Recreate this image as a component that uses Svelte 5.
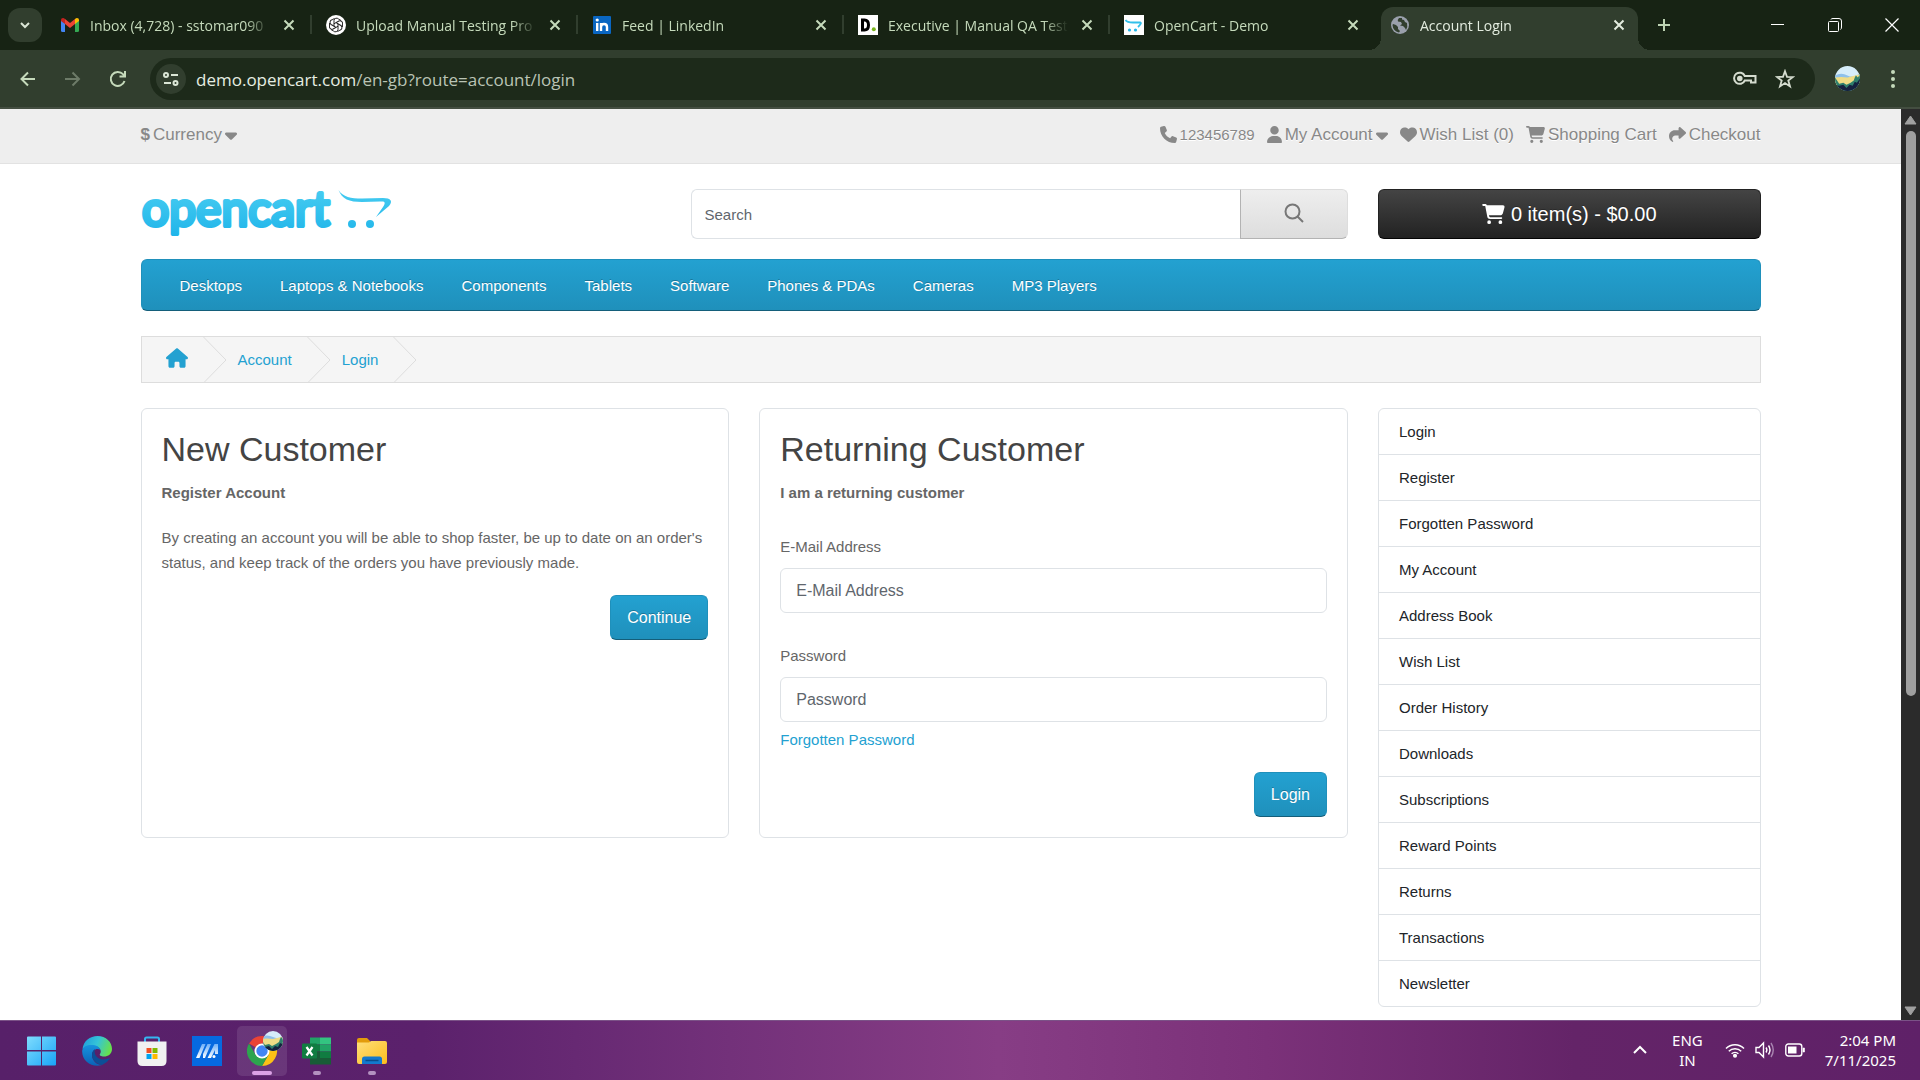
<script>
  const tabs = [
    { icon: 'gmail', title: 'Inbox (4,728) - sstomar090' },
    { icon: 'gpt', title: 'Upload Manual Testing Pro' },
    { icon: 'linkedin', title: 'Feed | LinkedIn' },
    { icon: 'd', title: 'Executive | Manual QA Test' },
    { icon: 'cart', title: 'OpenCart - Demo' },
    { icon: 'globe', title: 'Account Login', active: true }
  ];
  const menu = ['Desktops', 'Laptops & Notebooks', 'Components', 'Tablets', 'Software', 'Phones & PDAs', 'Cameras', 'MP3 Players'];
  const side = ['Login', 'Register', 'Forgotten Password', 'My Account', 'Address Book', 'Wish List', 'Order History', 'Downloads', 'Subscriptions', 'Reward Points', 'Returns', 'Transactions', 'Newsletter'];
  const petals = [0, 60, 120, 180, 240, 300];
  const paths = {
    caret: ['0 0 320 512', 'M137.4 374.6c12.5 12.5 32.8 12.5 45.3 0l128-128c9.2-9.2 11.9-22.9 6.9-34.9s-16.6-19.8-29.6-19.8L32 192c-12.9 0-24.6 7.8-29.6 19.8s-2.2 25.7 6.9 34.9l128 128z'],
    phone: ['0 0 512 512', 'M164.9 24.6c-7.7-18.6-28-28.5-47.4-23.2l-88 24C12.1 30.2 0 46 0 64C0 311.4 200.6 512 448 512c18 0 33.8-12.1 38.6-29.5l24-88c5.3-19.4-4.6-39.7-23.2-47.4l-96-40c-16.3-6.8-35.2-2.1-46.3 11.6L304.7 368C234.3 334.7 177.3 277.7 144 207.3L193.3 167c13.7-11.2 18.4-30 11.6-46.3l-40-96z'],
    user: ['0 0 448 512', 'M224 256A128 128 0 1 0 224 0a128 128 0 1 0 0 256zm-45.7 48C79.8 304 0 383.8 0 482.3C0 498.7 13.3 512 29.7 512H418.3c16.4 0 29.7-13.3 29.7-29.7C448 383.8 368.2 304 269.7 304H178.3z'],
    heart: ['0 0 512 512', 'M47.6 300.4L228.3 469.1c7.5 7 17.4 10.9 27.7 10.9s20.2-3.9 27.7-10.9L464.4 300.4c30.4-28.3 47.6-68 47.6-109.5v-5.8c0-69.9-50.5-129.5-119.4-141C347 36.5 300.6 51.4 268 84L256 96 244 84c-32.6-32.6-79-47.5-124.6-39.9C50.5 55.6 0 115.2 0 185.1v5.8c0 41.5 17.2 81.2 47.6 109.5z'],
    cart: ['0 0 576 512', 'M0 24C0 10.7 10.7 0 24 0H69.5c22 0 41.5 12.8 50.6 32h411c26.3 0 45.5 25 38.6 50.4l-41 152.3c-8.5 31.4-37 53.3-69.5 53.3H170.7l5.4 28.5c2.2 11.3 12.1 19.5 23.6 19.5H488c13.3 0 24 10.7 24 24s-10.7 24-24 24H199.7c-34.6 0-64.3-24.6-70.7-58.5L77.4 54.5c-.7-3.8-4-6.5-7.9-6.5H24C10.7 48 0 37.3 0 24zM128 464a48 48 0 1 1 96 0 48 48 0 1 1 -96 0zm336-48a48 48 0 1 1 0 96 48 48 0 1 1 0-96z'],
    share: ['0 0 512 512', 'M307 34.8c-11.5 5.1-19 16.6-19 29.2v64H176C78.8 128 0 206.8 0 304C0 417.3 81.5 467.9 100.2 478.1c2.5 1.4 5.3 1.9 8.1 1.9c10.9 0 19.7-8.9 19.7-19.7c0-7.5-4.3-14.4-9.8-19.5C108.8 431.9 96 414.4 96 384c0-53 43-96 96-96h96v64c0 12.6 7.4 24.1 19 29.2s25 3 34.4-5.4l160-144c6.7-6.1 10.6-14.7 10.6-23.8s-3.8-17.7-10.6-23.8l-160-144c-9.4-8.5-22.9-10.6-34.4-5.4z'],
    house: ['0 0 576 512', 'M575.8 255.5c0 18-15 32.1-32 32.1h-32l.7 160.2c0 2.7-.2 5.4-.5 8.1V472c0 22.1-17.9 40-40 40H456c-1.1 0-2.2 0-3.3-.1c-1.4 .1-2.8 .1-4.2 .1H416 392c-22.1 0-40-17.9-40-40V448 384c0-17.7-14.3-32-32-32H256c-17.7 0-32 14.3-32 32v64 24c0 22.1-17.9 40-40 40H160 128.1c-1.5 0-3-.1-4.5-.2c-1.2 .1-2.4 .2-3.6 .2H104c-22.1 0-40-17.9-40-40V360c0-.9 0-1.9 .1-2.8V287.6H32c-18 0-32-14-32-32.1c0-9 3-17 10-24L266.4 8c7-7 15-8 22-8s15 2 21 7L564.8 231.5c8 7 12 15 11 24z']
  };
</script>

{#snippet fa(name, cls = '')}
  <svg class="fa {cls}" viewBox={paths[name][0]} aria-hidden="true"><path d={paths[name][1]} /></svg>
{/snippet}

{#snippet landscape()}
  <rect width="24" height="24" fill="#d6edfa" />
  <path d="M0 9Q6 6 12 9T24 7V15H0Z" fill="#8fc1ea" />
  <path d="M0 11Q6 10 12 11L24 8V19H0Z" fill="#efdc86" />
  <path d="M0 11L2 14L4 17L8 16L11 18L15 16L18 14L19 11L20 9L22 11L24 8V24H0Z" fill="#2f7f6c" />
  <path d="M0 18L4 19L8 18L11 21L14 18L17 19L19 15L21 16L24 12V24H0Z" fill="#15213f" />
{/snippet}

{#snippet chevron()}
  <svg class="chev" viewBox="0 0 24 46" aria-hidden="true"><path d="M0.500 0L23 23L.5 46" fill="none" stroke="#ddd" /></svg>
{/snippet}

{#snippet swoosh(id)}
  <path d="M.5 1C5 8 13 9.500 24 9.500L45 9C53 9 55 12 51 17L38 28L45 18C48 13 47 12 42 12.500L24 13C11 13 4 10 .5 1Z" fill={id} />
  <circle cx="14" cy="35" r="4" fill={id} />
  <circle cx="32" cy="35" r="4" fill={id} />
{/snippet}

<div class="desktop">
  <div class="strip">
    <button class="tabmenu" aria-label="Search tabs"><svg width="14" height="14" viewBox="0 0 14 14"><path d="M3 5L7 9L11 5" fill="none" stroke="#dbe6d6" stroke-width="2" /></svg></button>
    <div class="tabs">
      {#each tabs as t}
        <div class="tab" class:active={t.active}>
          <svg class="fav" viewBox="0 0 20 20" aria-hidden="true">
            {#if t.icon === 'gmail'}
              <path d="M1 5V15.500Q1 17 2.500 17H5V8Z" fill="#4285f4" />
              <path d="M19 5V15.500Q19 17 17.500 17H15V8Z" fill="#34a853" />
              <path d="M5 4L10 8L15 4V9L10 13L5 9Z" fill="#ea4335" />
              <path d="M1 5Q1 3 3 3Q4 3 5 4V9L1 6Z" fill="#c5221f" />
              <path d="M19 5Q19 3 17 3Q16 3 15 4V9L19 6Z" fill="#fbbc04" />
            {:else if t.icon === 'gpt'}
              <circle cx="10" cy="10" r="10" fill="#fff" />
              <g fill="none" stroke="#222" stroke-width="1">
                {#each petals as a}
                  <path d="M8 9V5.500A2.600 2.600 0 0 1 12.500 4L15 5.500" transform="rotate({a} 10 10)" />
                {/each}
                <path d="M10 7.600L12 8.800V11.200L10 12.400L8 11.200V8.800Z" />
              </g>
            {:else if t.icon === 'linkedin'}
              <rect x="1" y="1" width="18" height="18" rx="1" fill="#0a66c2" />
              <g stroke="#fff" stroke-width="2.400" fill="none"><path d="M5.200 8V16M9 8V16M9 12Q9 9 12 9T15 12V16" /></g>
              <circle cx="5.200" cy="5" r="1.600" fill="#fff" />
            {:else if t.icon === 'd'}
              <rect width="20" height="20" fill="#fff" />
              <path d="M4.500 5V15H6.500Q10.500 15 10.500 10T6.500 5Z" fill="none" stroke="#000" stroke-width="3" />
              <circle cx="15.800" cy="14.300" r="2" fill="#7ab51d" />
            {:else if t.icon === 'cart'}
              <rect width="20" height="20" fill="#fff" />
              <path d="M1.500 5Q3 7.500 9 7.500H16.500Q18 8 14 12" fill="none" stroke="#33c0ea" stroke-width="1.800" />
              <circle cx="5.500" cy="15" r="1.600" fill="#23b7ea" /><circle cx="11.500" cy="15" r="1.600" fill="#23b7ea" />
            {:else}
              <circle cx="10" cy="10" r="9" fill="#9aa0ac" />
              <path d="M3 9L6 10L8 12L8 14L10 16L9 17.500Q3 16 2.500 10ZM9 3Q7 5 8 6.500L11 7L12 9L10 10.500L13 11L15 13L16 15Q18 12 17 8L15 7L14 5L12 4.500L12 3Z" fill="#313e2e" />
            {/if}
          </svg>
          <span class="ttl">{t.title}</span>
          <button class="x" aria-label="Close tab"><svg width="12" height="12" viewBox="0 0 12 12"><path d="M1.500 1.500L10.500 10.500M10.500 1.500L1.500 10.500" stroke="currentColor" stroke-width="2" /></svg></button>
        </div>
      {/each}
    </div>
    <button class="plus" aria-label="New tab"><svg width="14" height="14" viewBox="0 0 14 14"><path d="M7 1V13M1 7H13" stroke="#bdd3b3" stroke-width="2" /></svg></button>
    <div class="wins">
      <button aria-label="Minimize"><svg width="14" height="14" viewBox="0 0 14 14"><path d="M0 6.500H13" stroke="#fff" /></svg></button>
      <button aria-label="Restore"><svg width="14" height="14" viewBox="0 0 14 14" fill="none" stroke="#fff"><rect x=".5" y="3.500" width="10" height="10" rx="1" /><path d="M3 1.500Q3 .5 5 .5H11Q13.500 .5 13.500 3V9Q13.500 11 12.500 11.500" /></svg></button>
      <button aria-label="Close"><svg width="14" height="14" viewBox="0 0 14 14"><path d="M.5 .5L13.500 13.500M13.500 .5L.5 13.500" stroke="#fff" stroke-width="1.200" /></svg></button>
    </div>
  </div>

  <div class="toolbar">
    <div class="navs">
      <button aria-label="Back"><svg width="18" height="18" viewBox="0 0 18 18" fill="none" stroke="#c5dabb" stroke-width="2"><path d="M16 9H3M9 2.500L2.500 9L9 15.500" /></svg></button>
      <button aria-label="Forward"><svg width="18" height="18" viewBox="0 0 18 18" fill="none" stroke="#6d7b68" stroke-width="2"><path d="M1 9H15M8.500 2.500L15 9L8.500 15.500" /></svg></button>
      <button aria-label="Reload"><svg width="18" height="18" viewBox="0 0 18 18" fill="none" stroke="#c5dabb" stroke-width="2"><path d="M15.500 11A7 7 0 1 1 14 4.200L16 6M16 1V6.500H10.500" /></svg></button>
    </div>
    <div class="omni">
      <button class="tune" aria-label="Site information"><svg width="18" height="18" viewBox="0 0 18 18" fill="none" stroke="#dbe6d6" stroke-width="2"><circle cx="4" cy="5" r="2" /><path d="M9 5H16M2 13H9" /><circle cx="13.500" cy="13" r="2" /></svg></button>
      <a class="url" href="#top">demo.opencart.com<span>/en-gb?route=account/login</span></a>
      <svg width="24" height="16" viewBox="0 0 24 16" fill="none" stroke="#d5dccf" stroke-width="2" aria-hidden="true"><path d="M11.800 5H22.500V11.500H18V9.500H11.800A5.600 5.600 0 1 1 11.800 5Z" /><circle cx="6.800" cy="7.500" r="1.800" fill="#d5dccf" /></svg>
      <svg class="star" width="20" height="20" viewBox="0 0 20 20" fill="none" stroke="#d5dccf" stroke-width="1.800" aria-hidden="true"><path d="M10 2.200L12 7.800L18 8L13.300 11.600L15 17.400L10 14L5 17.400L6.700 11.600L2 8L8 7.800Z" /></svg>
    </div>
    <svg class="ava" viewBox="0 0 24 24" aria-hidden="true"><defs><clipPath id="pa"><circle cx="12" cy="12" r="12" /></clipPath></defs><g clip-path="url(#pa)">{@render landscape()}</g></svg>
    <button class="dots" aria-label="Menu"><svg width="6" height="20" viewBox="0 0 6 20" fill="#c5dabb"><circle cx="3" cy="3" r="2" /><circle cx="3" cy="10" r="2" /><circle cx="3" cy="17" r="2" /></svg></button>
  </div>

  <div class="view">
    <div class="page" id="top">
      <div class="topbar">
        <div class="wrap row">
          <button class="tl"><b>$</b> Currency {@render fa('caret', 'cr')}</button>
          <div class="links">
            <span class="tl ph">{@render fa('phone', 'm')} 123456789</span>
            <a class="tl" href="#account">{@render fa('user', 'n')} My Account {@render fa('caret', 'cr')}</a>
            <a class="tl" href="#wish">{@render fa('heart', 'm')} Wish List (0)</a>
            <a class="tl" href="#cart">{@render fa('cart', 'w')} Shopping Cart</a>
            <a class="tl" href="#checkout">{@render fa('share', 'm')} Checkout</a>
          </div>
        </div>
      </div>

      <div class="wrap">
        <header class="grid head">
          <a class="logo" href="#home" aria-label="opencart home">
            <svg width="252" height="50" viewBox="0 0 252 50">
              <defs><linearGradient id="lg" gradientUnits="userSpaceOnUse" x1="0" y1="0" x2="0" y2="50"><stop offset="0" stop-color="#47ccf1" /><stop offset="1" stop-color="#1db3e9" /></linearGradient></defs>
              <text x="1" y="37" class="word">opencart</text>
              <g transform="translate(197 0)">{@render swoosh('url(#lg)')}</g>
            </svg>
          </a>
          <form class="search">
            <input type="text" placeholder="Search" aria-label="Search" />
            <button type="button" aria-label="Search"><svg width="20" height="20" viewBox="0 0 20 20" fill="none" stroke="#777" stroke-width="2"><circle cx="8.500" cy="8.500" r="7" /><path d="M13.500 13.500L19 19" /></svg></button>
          </form>
          <button class="cartbtn">{@render fa('cart', 'big')} 0 item(s) - $0.00</button>
        </header>

        <nav class="menu">
          {#each menu as m}<a href="#menu">{m}</a>{/each}
        </nav>

        <nav class="crumbs" aria-label="Breadcrumb">
          <a href="#home" aria-label="Home">{@render fa('house', 'home')}</a>{@render chevron()}
          <a href="#account">Account</a>{@render chevron()}
          <a href="#login">Login</a>{@render chevron()}
        </nav>

        <div class="grid main">
          <div class="cards">
            <section class="card">
              <h2>New Customer</h2>
              <p><strong>Register Account</strong></p>
              <p>By creating an account you will be able to shop faster, be up to date on an order's status, and keep track of the orders you have previously made.</p>
              <div class="end"><button class="btn">Continue</button></div>
            </section>
            <section class="card">
              <h2>Returning Customer</h2>
              <p><strong>I am a returning customer</strong></p>
              <div class="field">
                <label for="email">E-Mail Address</label>
                <input id="email" type="text" placeholder="E-Mail Address" />
              </div>
              <div class="field">
                <label for="pass">Password</label>
                <input id="pass" type="password" placeholder="Password" />
                <a href="#forgotten">Forgotten Password</a>
              </div>
              <div class="end"><button class="btn">Login</button></div>
            </section>
          </div>
          <aside class="list">
            {#each side as s}<a href="#side">{s}</a>{/each}
          </aside>
        </div>
      </div>
    </div>
    <div class="scroll" aria-hidden="true">
      <svg width="13" height="10" viewBox="0 0 13 10"><path d="M6.500 1L12 9H1Z" fill="#a0a0a0" stroke="#a0a0a0" stroke-linejoin="round" /></svg>
      <div class="track"><div class="thumb"></div></div>
      <svg width="13" height="10" viewBox="0 0 13 10"><path d="M6.500 9L12 1H1Z" fill="#a0a0a0" stroke="#a0a0a0" stroke-linejoin="round" /></svg>
    </div>
  </div>

  <footer class="taskbar">
    <div class="apps">
      <button aria-label="Start"><svg width="30" height="30" viewBox="0 0 30 30"><defs><linearGradient id="wg" x1="0" y1="0" x2="1" y2="1" gradientUnits="objectBoundingBox"><stop offset="0" stop-color="#7fdcfd" /><stop offset="1" stop-color="#18a4f8" /></linearGradient></defs><path d="M0 1.500Q0 .5 1 .5H14V14H0ZM15 .5H28Q29 .5 29 1.500V14H15ZM0 15.500H14V29.500H1Q0 29.500 0 28.500ZM15 15.500H29V28.500Q29 29.500 28 29.500H15Z" fill="url(#wg)" /></svg></button>
      <button aria-label="Edge"><svg width="30" height="30" viewBox="0 0 30 30"><defs><linearGradient id="e1" x1="0" y1=".2" x2="1" y2=".5"><stop offset="0" stop-color="#1f9ddb" /><stop offset=".5" stop-color="#35c4d8" /><stop offset="1" stop-color="#68e14a" /></linearGradient><linearGradient id="e2" x1="0" y1="0" x2="0" y2="1"><stop offset="0" stop-color="#1793de" /><stop offset="1" stop-color="#0b62b6" /></linearGradient></defs><path d="M.5 13C1.500 5 8 0 15.500 0C24 0 30 6 30 13C30 18 26 20.500 22 20.500C19 20.500 17 19.500 18 18C20 15 18 10.500 12 10C7 9.500 2 11 .5 13Z" fill="url(#e1)" /><path d="M.2 14.500C1 10 6 8.500 11 9C16 9.500 18 12 18.500 14C15 11.500 10 14 10 19C10 25 15 29 20 29C10 32 -.5 25 .2 14.500Z" fill="url(#e2)" /><path d="M13 13C8 16 9 27 20 29Q25 27 28 22.500C27 21.500 24 24 20 23.500C15 23 11.500 18 13 13Z" fill="#0c4f97" /></svg></button>
      <button aria-label="Microsoft Store"><svg width="30" height="30" viewBox="0 0 30 30"><path d="M8 6V3Q8 1.500 9.500 1.500H20.500Q22 1.500 22 3V6" fill="none" stroke="#35b5f0" stroke-width="2" /><path d="M.5 5.500H29.500V25Q29.500 30 24.500 30H5.500Q.5 30 .5 25Z" fill="#f1f1f1" /><path d="M9.500 12H14.500V17H9.500Z" fill="#f25022" /><path d="M15.500 12H20.500V17H15.500Z" fill="#7fba00" /><path d="M9.500 18H14.500V23H9.500Z" fill="#00a4ef" /><path d="M15.500 18H20.500V23H15.500Z" fill="#ffb900" /></svg></button>
      <button aria-label="MyASUS"><svg width="30" height="30" viewBox="0 0 30 30"><defs><linearGradient id="mg" x1="0" y1="1" x2="0" y2="0"><stop offset="0" stop-color="#fff" /><stop offset="1" stop-color="#6fb0f8" /></linearGradient></defs><rect width="30" height="30" fill="#0669e0" /><path d="M4 22L10 8H13.500L7.500 22ZM11 18L15.500 8H19L13 22H11ZM15.500 22L22.500 8H26V18H23V14L19 22Z" fill="url(#mg)" /><circle cx="22" cy="20.500" r="1.500" fill="#fff" /></svg></button>
      <button class="on" aria-label="Chrome">
        <svg width="36" height="36" viewBox="0 0 36 36"><defs><clipPath id="pb"><circle cx="26" cy="10" r="10" /></clipPath></defs>
          <path d="M15 20L2 12.500A15 15 0 0 1 28 12.500L15 12.500Z" fill="#ea4335" /><path d="M15 20L28 12.500A15 15 0 0 1 15 35L15 35L21.500 23.700Z" fill="#fbc116" /><path d="M2 12.500L8.500 23.700L15 27.500L15 27.500L15 35A15 15 0 0 1 2 12.500Z" fill="#2da44e" /><path d="M15 35L21.500 23.700L15 27L8.500 23.700Z" fill="#2da44e" /><circle cx="15" cy="20" r="7.500" fill="#fff" /><circle cx="15" cy="20" r="5.700" fill="#4285f4" />
          <g clip-path="url(#pb)"><g transform="translate(14 -3)">{@render landscape()}</g></g></svg>
        <i class="bar"></i></button>
      <button aria-label="Excel"><svg width="30" height="30" viewBox="0 0 30 30"><path d="M8 1.500H18V8.500H8Z" fill="#21a366" /><path d="M18 1.500H29V8.500H18Z" fill="#33c481" /><path d="M8 8.500H18V15.500H8Z" fill="#107c41" /><path d="M18 8.500H29V15.500H18Z" fill="#21a366" /><path d="M8 15.500H18V28.500H8Z" fill="#185c37" /><path d="M18 15.500H29V22H18Z" fill="#107c41" /><path d="M18 22H29V28.500H18Z" fill="#185c37" /><rect x="0" y="7.500" width="15" height="15" rx="1" fill="#107c41" /><path d="M4.500 11L10.500 19.500M10.500 11L4.500 19.500" stroke="#fff" stroke-width="2.200" /></svg><i class="dot"></i></button>
      <button aria-label="File Explorer"><svg width="30" height="30" viewBox="0 0 30 30"><path d="M0 8V4Q0 2 2 2H10L13 5V8Z" fill="#e39c0b" /><defs><linearGradient id="fg" x1="0" y1="0" x2="1" y2="1"><stop offset="0" stop-color="#ffdf7b" /><stop offset="1" stop-color="#fcbd1c" /></linearGradient></defs><path d="M0 6.500H12L14 5H28Q30 5 30 7V26Q30 28 28 28H2Q0 28 0 26Z" fill="url(#fg)" /><path d="M5 28V23Q5 20.500 7.500 20.500H22.500Q25 20.500 25 23V28Z" fill="#1479cd" /><path d="M8.500 24.500H21.500" stroke="#0a4c8b" stroke-width="1.500" /></svg><i class="dot"></i></button>
    </div>
    <div class="tray">
      <button aria-label="Show hidden icons"><svg width="14" height="10" viewBox="0 0 14 10"><path d="M1 8L7 2L13 8" fill="none" stroke="#fff" stroke-width="2" /></svg></button>
      <span class="lang">ENG<br />IN</span>
      <div class="status">
        <svg width="20" height="16" viewBox="0 0 20 16" fill="none" stroke="#fff" stroke-width="1.500"><path d="M1 6.500A12.500 12.500 0 0 1 19 6.500M3.800 9.300A8.600 8.600 0 0 1 16.200 9.300M6.600 11.800A5 5 0 0 1 13.400 11.800" /><circle cx="10" cy="13.800" r="1.300" fill="#fff" /></svg>
        <svg width="20" height="18" viewBox="0 0 20 18" fill="none" stroke="#fff" stroke-width="1.400"><path d="M1 6.500H4L8.500 2V16L4 11.500H1Z" /><path d="M11 6.500Q12.800 9 11 11.500M13.500 4.500Q16.500 9 13.500 13.500" /><path d="M16 2Q20.500 9 16 16" stroke="#a884b0" /></svg>
        <svg width="20" height="14" viewBox="0 0 20 14"><rect x=".8" y="1" width="16" height="12" rx="2.500" fill="none" stroke="#fff" stroke-width="1.400" /><rect x="3" y="3.500" width="8.500" height="7" fill="#fff" /><path d="M18 5H19.500V9H18Z" fill="#fff" stroke="#fff" stroke-width=".6" /></svg>
      </div>
      <span class="clock">2:04 PM<br />7/11/2025</span>
    </div>
  </footer>
</div>

<style>
  :global(body) { margin: 0; }
  .desktop, .desktop :global(*) { box-sizing: border-box; }
  .desktop { min-height: 100vh; display: flex; flex-direction: column; background: #fff; font-family: "Liberation Sans", Arial, sans-serif; font-size: 15px; color: #666; }
  button { font: inherit; color: inherit; border: 0; background: none; padding: 0; cursor: pointer; }
  a { color: inherit; text-decoration: none; }
  svg { flex: none; display: block; }

  .strip { height: 50px; background: #172314; display: flex; align-items: center; padding-left: 8px; font-family: "Open Sans", sans-serif; }
  .tabmenu { width: 34px; height: 34px; border-radius: 12px; background: #313e2e; display: grid; place-items: center; margin-right: 4px; }
  .tabs { display: flex; align-self: stretch; flex: 0 1 1596px; min-width: 0; }
  .tab { position: relative; flex: 1 1 0; min-width: 0; display: flex; align-items: center; padding: 0 13px 0 14px; color: #c5dabb; font-size: 14px; }
  .tab:not(.active)::after { content: ""; position: absolute; right: 0; top: 15px; width: 2px; height: 19px; background: #313e2e; }
  .tab:nth-child(5)::after { display: none; }
  .active { color: #e3ecdf; }
  .active::before { content: ""; position: absolute; z-index: 0; left: 5px; right: 4px; top: 7px; bottom: 0; background: #313e2e; border-radius: 12px 12px 0 0; }
  .active > * { position: relative; z-index: 1; }
  .active::after { content: ""; position: absolute; left: -7px; right: -8px; bottom: 0; height: 12px; background: radial-gradient(circle at 0 0, transparent 12px, #313e2e 12px) left / 12px 12px no-repeat, radial-gradient(circle at 100% 0, transparent 12px, #313e2e 12px) right / 12px 12px no-repeat; }
  .fav { width: 20px; height: 20px; }
  .ttl { flex: 1; min-width: 0; margin-left: 10px; overflow: hidden; white-space: nowrap; -webkit-mask-image: linear-gradient(to right, #000 calc(100% - 24px), transparent); mask-image: linear-gradient(to right, #000 calc(100% - 24px), transparent); }
  .x { width: 20px; height: 20px; display: grid; place-items: center; margin-left: 9px; }
  .plus { width: 34px; height: 34px; display: grid; place-items: center; margin-left: 5px; }
  .wins { margin-left: auto; display: flex; align-self: stretch; }
  .wins button { width: 57px; display: grid; place-items: center; }

  .toolbar { height: 59px; background: #313e2e; border-bottom: 2px solid #444e41; display: flex; align-items: center; padding: 0 24px 0 19px; }
  .navs { display: flex; gap: 27px; margin-right: 23px; }
  .omni { flex: 1; height: 42px; margin-top: 1px; border-radius: 21px; background: #1d2a1a; display: flex; align-items: center; padding: 0 20px 0 6px; font-family: "Open Sans", sans-serif; font-size: 17px; }
  .tune { width: 30px; height: 30px; border-radius: 50%; background: #313e2e; display: grid; place-items: center; }
  .url { flex: 1; margin-left: 10px; color: #e6eee2; }
  .url span { color: #bac4b5; }
  .star { margin-left: 18px; }
  .ava { width: 25px; height: 25px; margin-left: 20px; }
  .dots { margin-left: 30px; }

  .view { flex: 1; display: flex; }
  .page { flex: 1; min-width: 0; padding-bottom: 13px; }
  .wrap { max-width: 1660px; margin: 0 auto; padding: 0 20px; }
  .topbar { height: 55px; background: #eee; border-bottom: 1px solid #e2e2e2; color: #888; text-shadow: 0 1px 0 #fff; }
  .row { display: flex; justify-content: space-between; padding-top: 14px; }
  .links { display: flex; gap: 12px; }
  .tl { display: flex; align-items: center; gap: 3px; height: 23px; font-size: 17px; white-space: nowrap; }
  .ph { font-size: 15px; }
  .fa { height: 16px; fill: currentColor; }
  .cr { width: 12px; height: 20px; }
  .m { width: 17px; height: 17px; }
  .n { width: 15px; height: 17px; }
  .w { width: 19px; height: 17px; }
  .big { width: 23px; height: 20px; }
  .home { width: 22px; height: 20px; }

  .grid { display: grid; grid-template-columns: repeat(12, minmax(0, 1fr)); column-gap: 30px; }
  .head { padding: 25px 0 20px; }
  .logo { grid-column: span 4; }
  .logo svg { overflow: visible; }
  .word { font-family: Lato, sans-serif; font-weight: 400; font-size: 48px; fill: url(#lg); stroke: url(#lg); stroke-width: 4; stroke-linejoin: round; }
  .search { grid-column: span 5; display: flex; height: 50px; }
  .search input { flex: 1; min-width: 0; border: 1px solid #dee2e6; border-right: 0; border-radius: 6px 0 0 6px; padding: 0 13px; font: inherit; }
  input::placeholder { color: #5f666d; opacity: 1; }
  .search button { width: 108px; display: grid; place-items: center; padding-bottom: 3px; border: 1px solid; border-color: #ddd #ddd #b3b3b3 #b3b3b3; border-radius: 0 6px 6px 0; background: linear-gradient(#eee, #ddd); }
  .cartbtn { grid-column: span 3; height: 50px; display: flex; align-items: center; justify-content: center; gap: 6px; color: #fff; font-size: 20px; border: 1px solid; border-color: #222 #222 #040404; border-radius: 6px; background: linear-gradient(#444, #222); text-shadow: 0 -1px 0 rgba(0, 0, 0, .25); }
  .menu { min-height: 52px; display: flex; align-items: center; flex-wrap: wrap; gap: 0 38px; padding: 0 38px; border: 1px solid; border-color: #1f90bb #1f90bb #145e7a; border-radius: 6px; background: linear-gradient(#23a1d1, #1f90bb); color: #fff; text-shadow: 0 -1px 0 rgba(0, 0, 0, .25); }
  .crumbs { margin: 25px 0; height: 47px; display: flex; align-items: center; background: #f5f5f5; border: 1px solid #ddd; padding-left: 13px; color: #23a1d1; overflow: hidden; }
  .crumbs a { padding: 0 15px 0 11px; }
  .chev { width: 24px; height: 46px; }
  .home { margin-bottom: 3px; }

  .main { align-items: start; }
  .cards { grid-column: span 9; display: grid; grid-template-columns: 1fr 1fr; gap: 30px; }
  .card { border: 1px solid #dee2e6; border-radius: 6px; padding: 20px; line-height: 25px; }
  h2 { margin: 0 0 10px; font-size: 34px; line-height: 41px; font-weight: 400; color: #444; }
  p { margin: 0 0 20px; }
  .field { display: flex; flex-direction: column; align-items: flex-start; padding-top: 9px; margin-bottom: 16px; }
  .field input { width: 100%; height: 45px; margin: 9px 0 5px; border: 1px solid #dee2e6; border-radius: 6px; padding: 0 15px; font: inherit; font-size: 16px; }
  .field a { color: #23a1d1; }
  .field + .end { padding-top: 4px; }
  .end { display: flex; justify-content: flex-end; }
  .btn { height: 45px; padding: 0 16px; font-size: 16px; color: #fff; border: 1px solid; border-color: #1f90bb #1f90bb #145e7a; border-radius: 6px; background: linear-gradient(#23a1d1, #1f90bb); text-shadow: 0 -1px 0 rgba(0, 0, 0, .25); }
  .list { grid-column: span 3; border: 1px solid #dee2e6; border-radius: 6px; color: #212529; }
  .list a { display: flex; align-items: center; height: 46px; padding: 0 20px 1px; }
  .list a:first-child { height: 45px; }
  .list a + a { border-top: 1px solid #dee2e6; }

  .scroll { width: 19px; background: #2b2b2b; display: flex; flex-direction: column; align-items: center; padding: 6px 0 4px; }
  .track { flex: 1; padding: 6px 0; }
  .thumb { width: 10px; height: 65%; min-height: 40px; border-radius: 5px; background: #9f9f9f; }

  .taskbar { height: 60px; flex: none; display: flex; justify-content: space-between; align-items: center; border-top: 1px solid #7b5287; background: linear-gradient(90deg, #572069 0, #5b216c 22%, #73317a 38%, #873d85 52%, #7b3179 66%, #642468 82%, #5f2168 100%); color: #fff; font-family: "Noto Sans", sans-serif; }
  .apps { display: flex; gap: 5px; padding-left: 17px; }
  .apps button { position: relative; width: 50px; height: 50px; display: grid; place-items: center; }
  .on { border-radius: 5px; background: rgba(255, 255, 255, .1); }
  .on svg { margin: 0 0 4px 6px; }
  .bar, .dot { position: absolute; left: 50%; bottom: 1px; height: 4px; border-radius: 2px; }
  .bar { width: 20px; margin-left: -10px; background: #dca2e6; }
  .dot { width: 8px; margin-left: -4px; background: #b391c0; }
  .tray { display: flex; align-items: center; padding: 0 24px 2px 0; font-size: 15px; line-height: 20px; }
  .lang { margin-left: 25px; text-align: center; }
  .status { display: flex; align-items: center; gap: 10px; margin: 0 20px 0 22px; }
  .clock { text-align: right; }
</style>
